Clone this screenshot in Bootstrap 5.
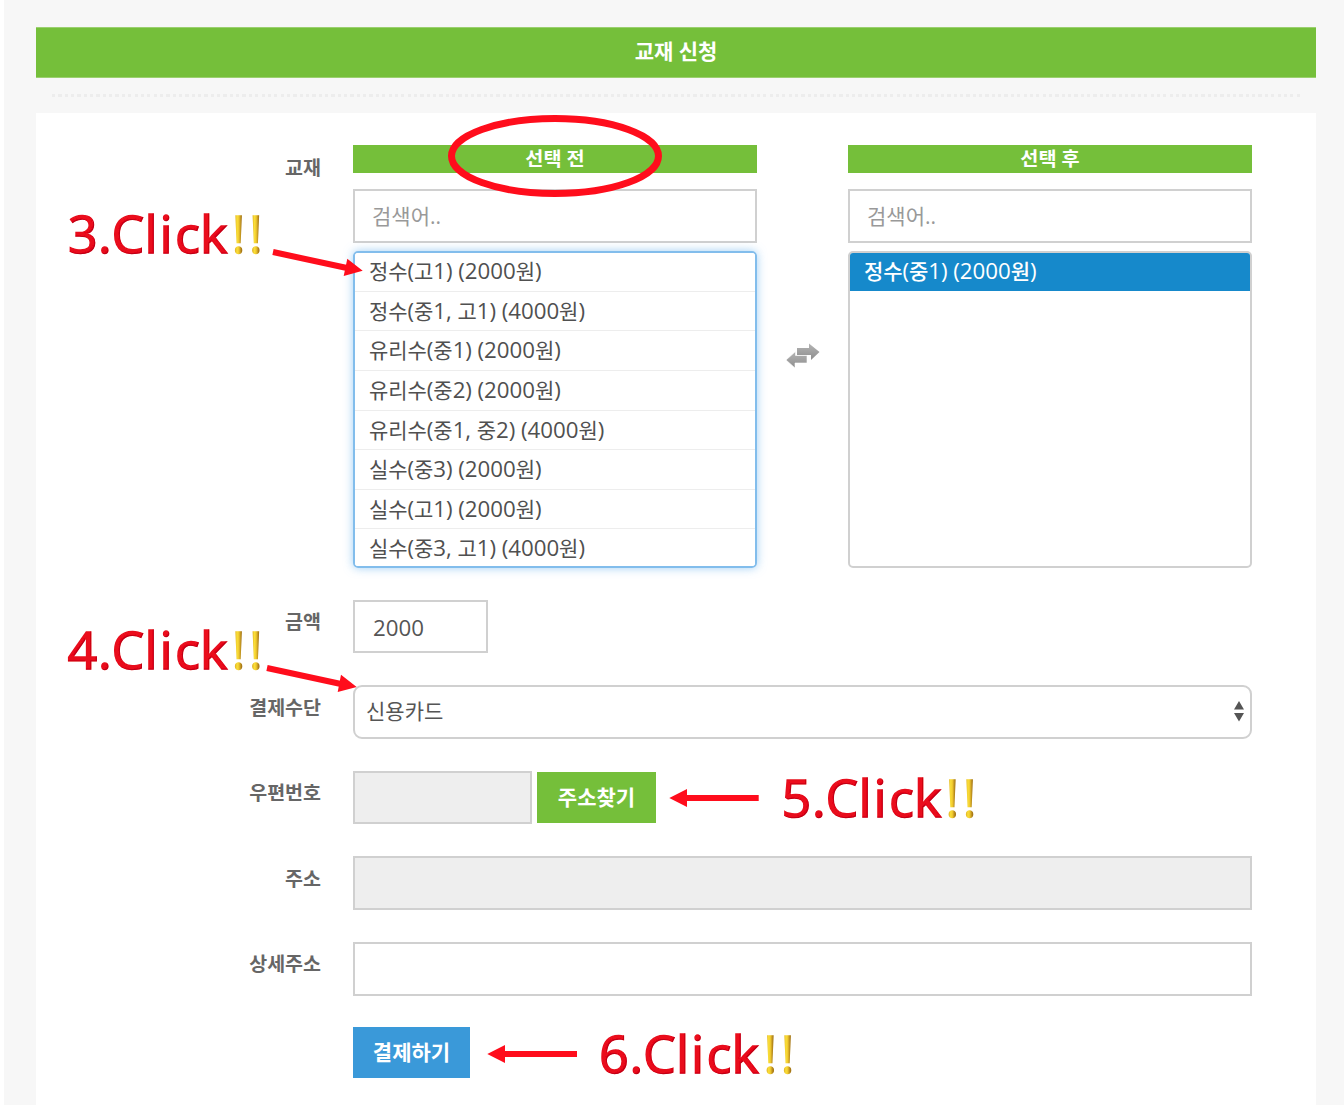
<!DOCTYPE html>
<html lang="ko">
<head>
<meta charset="utf-8">
<meta name="viewport" content="width=device-width, initial-scale=1">
<title>교재 신청</title>
<link href="https://cdn.jsdelivr.net/npm/bootstrap@5.3.0/dist/css/bootstrap.min.css" rel="stylesheet">
<style>
body{font-family:"Open Sans","Noto Sans CJK KR",sans-serif;font-size:22.3px;line-height:30px;color:#555;background:#fff;overflow:hidden}
.page-bg{background:#f7f7f7;margin-left:4px;height:1105px;padding:27px 28px 0 32px}
.title-bar{height:51px;background:#75bf3a;color:#fff;font-size:21px;font-weight:600;line-height:46px;border:1px solid #9bd06f;border-width:1px 0}
.dots{height:3px;margin:16px 15px 16px 16px;background:repeating-linear-gradient(90deg,#ededed 0 3.2px,transparent 3.2px 6.35px)}
.panel{height:992px;padding:32px 64px 0 0}
.field-row{gap:32px;margin-bottom:32px}
.field-label{width:285px;flex:none;font-size:19.5px;font-weight:700;color:#666;text-align:right;padding-top:7.5px}
.ko{font-size:21px}
.box{height:53.6px;border:2px solid #d0d0d0;border-radius:0;color:#555;font-size:22.3px;padding:2px 18px 0;background:#fff}
.box::placeholder{color:#999;font-size:21px;opacity:1}
.box:disabled{background:#eee}
.book-side{width:404px}
.book-side .box{padding:0 17px}
.side-head{height:28px;background:#75bf3a;color:#fff;font-size:19.7px;font-weight:600;line-height:27px;margin-bottom:16px}
.book-list{height:317px;margin-top:8px;border:2px solid #d0d0d0;border-radius:5px;overflow:hidden}
.book-list.on{border-color:#82bdec;box-shadow:0 0 10px rgba(82,168,236,.55)}
.book-list .list-group-item{height:39.6px;flex:none;padding:0 14px;line-height:37.4px;letter-spacing:-.05px;border:0;border-bottom:1.6px solid #ededed;border-radius:0;color:#505050;white-space:nowrap;background:#fff}
.book-list .list-group-item:first-child{height:39.2px;line-height:36px}
.book-list .list-group-item.active{height:38.400px;background:#1689cb;color:#fff;font-weight:500;border-bottom-color:#1689cb;margin:0}
.swap{width:91px;padding-top:197px}
.pay-select{border-radius:9px;padding:0 5px 1px 11px}
.btn-act{height:51px;border:0;border-radius:0;color:#fff;font-size:21px;font-weight:600;padding:0 0 1px;line-height:48px;margin-top:-1px}
.notes{position:absolute;left:0;top:0;pointer-events:none}
.notes text{font-family:"Open Sans",sans-serif;font-size:52px}
</style>
</head>
<body>
<main class="page-bg">
  <div class="title-bar text-center">교재 신청</div>
  <div class="dots"></div>
  <form class="panel bg-white">
    <div class="field-row d-flex">
      <label class="field-label">교재</label>
      <div class="d-flex">
        <div class="book-side">
          <div class="side-head text-center">선택 전</div>
          <input class="box form-control" placeholder="검색어..">
          <div class="book-list on list-group">
            <div class="list-group-item"><span class="ko">정수</span>(<span class="ko">고</span>1) (2000<span class="ko">원</span>)</div>
            <div class="list-group-item"><span class="ko">정수</span>(<span class="ko">중</span>1, <span class="ko">고</span>1) (4000<span class="ko">원</span>)</div>
            <div class="list-group-item"><span class="ko">유리수</span>(<span class="ko">중</span>1) (2000<span class="ko">원</span>)</div>
            <div class="list-group-item"><span class="ko">유리수</span>(<span class="ko">중</span>2) (2000<span class="ko">원</span>)</div>
            <div class="list-group-item"><span class="ko">유리수</span>(<span class="ko">중</span>1, <span class="ko">중</span>2) (4000<span class="ko">원</span>)</div>
            <div class="list-group-item"><span class="ko">실수</span>(<span class="ko">중</span>3) (2000<span class="ko">원</span>)</div>
            <div class="list-group-item"><span class="ko">실수</span>(<span class="ko">고</span>1) (2000<span class="ko">원</span>)</div>
            <div class="list-group-item"><span class="ko">실수</span>(<span class="ko">중</span>3, <span class="ko">고</span>1) (4000<span class="ko">원</span>)</div>
          </div>
        </div>
        <div class="swap text-center">
          <svg class="d-block mx-auto" width="36" height="28" viewBox="0 0 36 28">
            <defs><linearGradient id="gr" x2="0" y2="1"><stop stop-color="#b5b5b5"/><stop offset="1" stop-color="#8d8d8d"/></linearGradient></defs>
            <path d="M12 6h12V1.500l10.500 8.500-8.500 8v-5H12z" fill="url(#gr)"/>
            <path d="M1 18l9.500-8.500v4H22v7.500H10V26z" fill="url(#gr)" stroke="#fff" stroke-width=".6"/>
          </svg>
        </div>
        <div class="book-side">
          <div class="side-head text-center">선택 후</div>
          <input class="box form-control" placeholder="검색어..">
          <div class="book-list list-group">
            <div class="list-group-item active"><span class="ko">정수</span>(<span class="ko">중</span>1) (2000<span class="ko">원</span>)</div>
          </div>
        </div>
      </div>
    </div>
    <div class="field-row d-flex">
      <label class="field-label">금액</label>
      <input class="box form-control" style="width:135px" value="2000">
    </div>
    <div class="field-row d-flex">
      <label class="field-label">결제수단</label>
      <div class="box pay-select flex-grow-1 d-flex justify-content-between align-items-center">
        <span class="ko">신용카드</span>
        <svg width="12" height="22" viewBox="0 0 12 22"><path d="M6 1l5 8.500H1zM1 13h10l-5 8.500z" fill="#555"/></svg>
      </div>
    </div>
    <div class="field-row d-flex">
      <label class="field-label">우편번호</label>
      <div class="d-flex align-items-center">
        <input class="box form-control" style="width:179px" disabled>
        <button type="button" class="btn btn-act" style="width:119px;margin-left:5px;background:#75bf3a">주소찾기</button>
      </div>
    </div>
    <div class="field-row d-flex">
      <label class="field-label">주소</label>
      <input class="box form-control" disabled>
    </div>
    <div class="field-row d-flex">
      <label class="field-label">상세주소</label>
      <input class="box form-control">
    </div>
    <div class="field-row d-flex">
      <span class="field-label p-0"></span>
      <button type="button" class="btn btn-act" style="width:117px;background:#3a99d9">결제하기</button>
    </div>
  </form>
</main>
<svg class="notes" width="1344" height="1114" viewBox="0 0 1344 1114">
  <defs>
    <linearGradient id="red" x2="0" y2="1"><stop offset="0" stop-color="#f0101f"/><stop offset="1" stop-color="#e50b1b"/></linearGradient>
    <linearGradient id="gold" gradientUnits="userSpaceOnUse" x1="234.500" x2="251.800" y1="0" y2="0" spreadMethod="repeat"><stop offset="0" stop-color="#d9a722"/><stop offset=".15" stop-color="#fadf38"/><stop offset=".25" stop-color="#f0c92e"/><stop offset=".4" stop-color="#a97a18"/><stop offset=".8" stop-color="#a97a18"/><stop offset="1" stop-color="#d9a722"/></linearGradient>
    <filter id="bevel" x="-5%" y="-10%" width="110%" height="120%">
      <feOffset in="SourceAlpha" dx="-1.5" dy="-1" result="o"/>
      <feComposite in="SourceAlpha" in2="o" operator="out" result="edge"/>
      <feGaussianBlur in="edge" stdDeviation=".4" result="soft"/>
      <feFlood flood-color="#8a0010" flood-opacity=".55"/>
      <feComposite in2="soft" operator="in"/>
      <feComposite in2="SourceAlpha" operator="in" result="shade"/>
      <feMerge><feMergeNode in="SourceGraphic"/><feMergeNode in="shade"/></feMerge>
    </filter>
  </defs>
  <g fill="url(#red)" stroke="#e80d1d" stroke-width="1.4" filter="url(#bevel)">
    <text x="68 98 111.500 144.500 159.500 175 200" y="253.300">3.Click</text>
    <text x="67.500 98 111.500 144.500 159.500 175 200" y="669.300">4.Click</text>
    <text x="781.500 812 825.500 858.500 873.500 889 914" y="817.300">5.Click</text>
    <text x="599 629.500 643 676 691 706.500 731.500" y="1073.300">6.Click</text>
  </g>
  <g fill="url(#gold)" stroke="url(#gold)" stroke-width="1.4">
    <text x="231.800 249.100" y="253.300">!!</text>
    <text x="231.800 249.100" y="669.300">!!</text>
    <g transform="translate(713.600 0)"><text x="231.800 249.100" y="817.300">!!</text></g>
    <g transform="translate(531.600 0)"><text x="231.800 249.100" y="1073.300">!!</text></g>
  </g>
  <ellipse cx="555" cy="156" rx="103.500" ry="37.500" fill="none" stroke="#ff0d1c" stroke-width="7"/>
  <g stroke="#ff0d1c" stroke-width="6" fill="none"><path d="M273 252l74 16M267 668l74 16M758.700 798H685M577 1054h-73"/></g>
  <path fill="#ff0d1c" d="M362.700 270.700L347.300 258.700L343.700 276zM356.700 687L341 674.700L337.700 692zM669.300 798l17.700-9v18zM487.300 1054l17.700-9v18z"/>
</svg>
<script src="https://cdn.jsdelivr.net/npm/bootstrap@5.3.0/dist/js/bootstrap.bundle.min.js"></script>
</body>
</html>
